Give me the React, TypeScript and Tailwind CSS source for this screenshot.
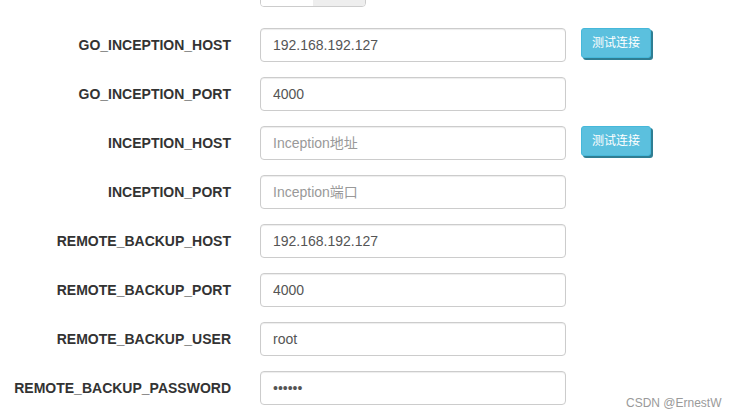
import React from 'react'

interface Field {
  label: string
  value?: string
  placeholder?: string
  password?: boolean
  test?: boolean
}

const fields: Field[] = [
  { label: 'GO_INCEPTION_HOST', value: '192.168.192.127', test: true },
  { label: 'GO_INCEPTION_PORT', value: '4000' },
  { label: 'INCEPTION_HOST', placeholder: 'Inception地址', test: true },
  { label: 'INCEPTION_PORT', placeholder: 'Inception端口' },
  { label: 'REMOTE_BACKUP_HOST', value: '192.168.192.127' },
  { label: 'REMOTE_BACKUP_PORT', value: '4000' },
  { label: 'REMOTE_BACKUP_USER', value: 'root' },
  { label: 'REMOTE_BACKUP_PASSWORD', value: '123456', password: true },
]

const font = { fontFamily: '"Liberation Sans", Arial, "Noto Sans CJK SC", sans-serif' }

export default function App() {
  return (
    <div className="relative w-[736px] h-[417px] overflow-hidden bg-white text-[#333]" style={font}>
      {/* switch cut off at the top */}
      <div className="ml-[260px] -mt-[27px] flex h-[34px] w-[106px] overflow-hidden rounded-[4px] border border-[#ccc]">
        <div className="w-[52px] bg-white" />
        <div className="flex-1 bg-[#eee]" />
      </div>

      <div className="mt-[21px] flex flex-col gap-[15px]">
        {fields.map((f) => (
          <div key={f.label} className="flex items-start">
            <label className="w-[231px] text-right text-[14px] font-bold leading-[34px] text-[#333]">
              {f.label}
            </label>
            <input
              readOnly
              type={f.password ? 'password' : 'text'}
              defaultValue={f.value}
              placeholder={f.placeholder}
              className="ml-[29px] h-[34px] w-[306px] rounded-[4px] border border-[#ccc] bg-white px-[12px] text-[14px] text-[#555] placeholder:text-[#999] shadow-[inset_0_1px_1px_rgba(0,0,0,0.075)] outline-none"
              style={font}
            />
            {f.test && (
              <button className="ml-[15px] h-[30px] rounded-[3px] border border-[#46b8da] bg-[#5bc0de] px-[10px] text-[12px] leading-[28px] text-white shadow-[2px_2px_0_#2f7e93]">
                测试连接
              </button>
            )}
          </div>
        ))}
      </div>

      <div className="absolute left-[626px] top-[394px] text-[12px] text-[#9a9a9a]">CSDN @ErnestW</div>
    </div>
  )
}
